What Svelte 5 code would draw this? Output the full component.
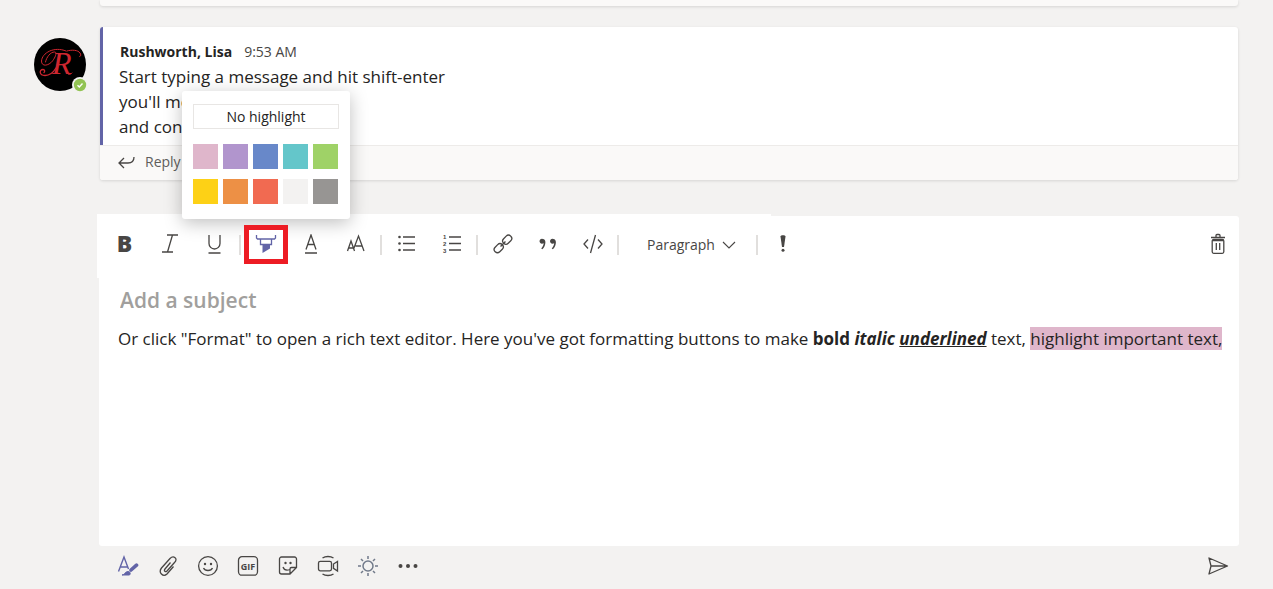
<script>
	// Message shown in the thread.
	const Message = {
		Author: "Rushworth, Lisa",
		Time: "9:53 AM",
		Lines: [
			"Start typing a message and hit shift-enter",
			"you'll move",
			"and continue"
		]
	}

	// Highlight colours, in palette order.
	const Swatches = [
		{ Name: "Pink", Color: "#dfb6cb" },
		{ Name: "Purple", Color: "#b195cd" },
		{ Name: "Blue", Color: "#6888c9" },
		{ Name: "Teal", Color: "#64c6ca" },
		{ Name: "Green", Color: "#9fd267" },
		{ Name: "Yellow", Color: "#fdd116" },
		{ Name: "Orange", Color: "#ed9045" },
		{ Name: "Red", Color: "#f16a51" },
		{ Name: "Light grey", Color: "#f3f2f1" },
		{ Name: "Grey", Color: "#979593" }
	]

	let PaletteOpen = $state(true)
	let Highlight = $state("#dfb6cb")
	let Subject = $state("")

	// Open or close the palette.
	function TogglePalette() {
		PaletteOpen = !PaletteOpen
	}

	// Pick a colour for the marked text.
	function PickColor(Color) {
		Highlight = Color
		PaletteOpen = false
	}
</script>

<div class="page">
	<!-- End of the previous thread. -->
	<div class="previous"></div>

	<!-- Thread. -->
	<section class="thread">
		<div class="avatar">
			<svg width="52" height="53" viewBox="0 0 52 53" aria-hidden="true">
				<ellipse cx="26" cy="26.5" rx="26" ry="26.5" fill="#000" />
				<text x="18" y="36" class="monogram">R</text>
				<g fill="none" stroke="#cf2730" stroke-linecap="round">
					<path d="M32 13C20 8 8 15 7.500 23c0 6 7 5 11 0 3-4 5-9 2-9-4 0-8 5-9 10" stroke-width="1" />
					<path d="M22 30c-3 5-7 7.500-11 7.500-6 0-6-6-2-6 2 0 2 2 1 3" stroke-width="1.300" />
					<path d="M33 13c5-1.500 11-1 13 2 1.500 2 .5 4-.5 3.500M33 35c1 2 3 2 5 0" stroke-width="1" />
				</g>
			</svg>
			<svg class="presence" width="16" height="16" viewBox="0 0 16 16" role="img" aria-label="Available">
				<circle cx="8" cy="8" r="8" fill="#f3f2f1" />
				<circle cx="8" cy="8" r="6.2" fill="#92c353" />
				<path d="M5.500 8.200l1.800 1.700 3.200-3.400" fill="none" stroke="#fff" stroke-width="1.400" />
			</svg>
		</div>

		<article class="card">
			<div class="message">
				<header><strong>{Message.Author}</strong><time>{Message.Time}</time></header>
				{#each Message.Lines as Line}
					<p>{Line}</p>
				{/each}
			</div>
			<button class="reply">
				<svg width="18" height="14" viewBox="0 0 18 14" class="line" aria-hidden="true">
					<path d="M6 3L1 8l5 5M1 8h9c4 0 6-2 6-6" />
				</svg>
				Reply
			</button>
		</article>
	</section>

	<!-- Editor. -->
	<section class="composer">
		<div class="toolbar" role="toolbar" aria-label="Formatting">
			<button class="tool bold" aria-label="Bold">B</button>
			<button class="tool" aria-label="Italic">
				<svg width="20" height="20" viewBox="0 0 20 20" class="line"><path d="M7 1h11M2 18h11M12.500 1l-5 17" /></svg>
			</button>
			<button class="tool" aria-label="Underline">
				<svg width="20" height="20" viewBox="0 0 20 20" class="line"><path d="M4 1v8.500a5.500 5.500 0 0 0 11 0V1M3.500 19h12" /></svg>
			</button>
			<span class="divider"></span>

			<div class="picker">
				<button class="tool marked" aria-label="Text highlight colour" aria-expanded={PaletteOpen} onclick={TogglePalette}>
					<svg width="22" height="20" viewBox="0 0 22 20">
						<path d="M1.500 1v3l1 1h17l1-1V1M5.500 5v5.500h11V5" fill="none" stroke="#6264a7" stroke-width="1.300" />
						<path d="M7.500 11h7.500v3.500L7.500 19z" fill="#6264a7" />
					</svg>
				</button>
				{#if PaletteOpen}
					<div class="palette">
						<button class="none" onclick={() => PickColor("transparent")}>No highlight</button>
						<div class="swatches">
							{#each Swatches as Swatch}
								<button aria-label={Swatch.Name} style="background: {Swatch.Color}" onclick={() => PickColor(Swatch.Color)}></button>
							{/each}
						</div>
					</div>
				{/if}
			</div>
			<button class="tool" aria-label="Font colour">
				<svg width="20" height="20" viewBox="0 0 20 20" class="line"><path d="M5 15.500L10 1l5 14.500M6.700 10.500h6.600M4 19h12" /></svg>
			</button>
			<button class="tool" aria-label="Font size">
				<svg width="20" height="20" viewBox="0 0 20 20" class="line"><path d="M1.500 17L5 7l3.500 10M2.500 14h5M7.800 14.500L12.500 2l5.500 15M9.500 12h7" /></svg>
			</button>
			<span class="divider"></span>

			<button class="tool" aria-label="Bulleted list">
				<svg width="20" height="20" viewBox="0 0 20 20" class="line">
					<path d="M6 3h12M6 9.500h12M6 16h12" />
					<g fill="#484644" stroke="none"><circle cx="2.500" cy="3" r="1.300" /><circle cx="2.500" cy="9.500" r="1.300" /><circle cx="2.500" cy="16" r="1.300" /></g>
				</svg>
			</button>
			<button class="tool" aria-label="Numbered list">
				<svg width="20" height="20" viewBox="0 0 20 20" class="line">
					<path d="M7 3h12M7 9.500h12M7 16h12" />
					<g class="digits"><text x="1" y="5">1</text><text x="1" y="12">2</text><text x="1" y="19">3</text></g>
				</svg>
			</button>
			<span class="divider"></span>

			<button class="tool" aria-label="Insert link">
				<svg width="22" height="22" viewBox="0 0 22 22" class="line">
					<g transform="rotate(-45 11 11)"><rect x="0" y="7.700" width="10" height="6.500" rx="3.200" /><rect x="12" y="7.700" width="10" height="6.500" rx="3.200" /><path d="M7.500 11h7" /></g>
				</svg>
			</button>
			<button class="tool" aria-label="Quote">
				<svg width="20" height="20" viewBox="0 0 20 20" fill="#484644">
					<path d="M5 5a2.500 2.500 0 1 0-1 4.800c.8 0 1.200-.2 1.700-.5-.3 2-1 3.500-2.500 5.200l1.200.8c2-2 3-4.500 3-7C7.400 6.300 6.500 5 5 5z" />
					<path d="M15.500 5a2.500 2.500 0 1 0-1 4.800c.8 0 1.200-.2 1.700-.5-.3 2-1 3.500-2.500 5.200l1.200.8c2-2 3-4.500 3-7 0-2-1-3.300-2.400-3.300z" />
				</svg>
			</button>
			<button class="tool" aria-label="Code snippet">
				<svg width="20" height="20" viewBox="0 0 20 20" class="line"><path d="M5 5.500L1 10l4 4.500M15 5.500l4 4.500-4 4.500M12.500 1l-5 18" /></svg>
			</button>
			<span class="divider"></span>

			<label class="style">
				<select aria-label="Paragraph style">
					<option>Paragraph</option>
					<option>Heading 1</option>
					<option>Heading 2</option>
				</select>
				<svg width="14" height="8" viewBox="0 0 14 8" class="line thin"><path d="M1 1l6 6 6-6" /></svg>
			</label>
			<span class="divider"></span>

			<button class="tool" aria-label="Mark as important">
				<svg width="20" height="20" viewBox="0 0 20 20" fill="#484644"><path d="M7.500 2.500c0-1.800 5-1.800 5 0L11 13H9z" /><circle cx="10" cy="16.300" r="1.500" /></svg>
			</button>
			<button class="tool last" aria-label="Discard">
				<svg width="18" height="22" viewBox="0 0 18 22" class="line">
					<path d="M2 4.500h14M7 4V2.500q0-1 1-1h2q1 0 1 1V4" />
					<rect x="3.200" y="6.500" width="11.600" height="13.800" rx="1.500" />
					<path d="M3.500 7.500h11M7.300 10v7M10.700 10v7" />
				</svg>
			</button>
		</div>

		<input class="subject" aria-label="Subject" placeholder="Add a subject" bind:value={Subject}>
		<div class="editor" contenteditable="true" role="textbox" aria-label="Message" tabindex="0" spellcheck="false">
			Or click "Format" to open a rich text editor. Here you've got formatting buttons to make <b>bold</b> <b><i>italic</i></b> <b><i><u>underlined</u></i></b> text, <mark style="background: {Highlight}">highlight important text,</mark>
		</div>
	</section>

	<!-- Actions under the editor. -->
	<footer class="actions">
		<button class="action" aria-label="Format">
			<svg width="22" height="22" viewBox="0 0 22 22" fill="none" stroke="#6264a7" stroke-width="1.400">
				<path d="M1.500 16.500L7 2l4.500 12M3.500 12h7" />
				<path d="M14 15l5.500-4.800" stroke-width="3.600" stroke-linecap="round" />
				<path d="M5 20c3 0 3-3.500 6-3.500 2 0 3 2 1.500 3.500z" fill="#6264a7" stroke-width="1" />
			</svg>
		</button>
		<button class="action" aria-label="Attach">
			<svg width="22" height="22" viewBox="0 0 22 22" class="line"><path d="M13.500 7.500L8 14c-1.500 2 .5 3.500 2 2l7.500-8.500c4-4-1-7.500-4.500-4L4.500 13c-3.500 4.500 1.500 9.500 5.500 6l6.500-7.500" /></svg>
		</button>
		<button class="action" aria-label="Emoji">
			<svg width="22" height="22" viewBox="0 0 22 22" class="line"><circle cx="11" cy="11" r="9.400" /><path d="M6.500 13c1.500 3.300 7.500 3.300 9 0" /><g fill="#484644" stroke="none"><circle cx="8" cy="9" r="1.200" /><circle cx="14" cy="9" r="1.200" /></g></svg>
		</button>
		<button class="action" aria-label="Giphy">
			<svg width="22" height="22" viewBox="0 0 22 22" class="line"><rect x="1.500" y="1.700" width="19" height="18.500" rx="3.500" /><text x="11" y="14.700" text-anchor="middle" class="gif">GIF</text></svg>
		</button>
		<button class="action" aria-label="Sticker">
			<svg width="22" height="22" viewBox="0 0 22 22" class="line"><path d="M19.500 12.500V4a2 2 0 0 0-2-2h-13a2 2 0 0 0-2 2v13a2 2 0 0 0 2 2H13zh-5a1.500 1.500 0 0 0-1.500 1.500v5M6 12c1 3 4 3.500 7 2.500" /><g fill="#484644" stroke="none"><circle cx="8.500" cy="8" r="1.200" /><circle cx="13.500" cy="8" r="1.200" /></g></svg>
		</button>
		<button class="action" aria-label="Meet now">
			<svg width="22" height="22" viewBox="0 0 22 22" class="line"><rect x="1.500" y="6.300" width="13" height="9.500" rx="1.800" /><path d="M20.500 6.500v9.500l-4-2.700V9zM5.500 3c3-2 8-2 11 0M5.500 19c3 2 8 2 11 0" /></svg>
		</button>
		<button class="action" aria-label="Praise">
			<svg width="22" height="22" viewBox="0 0 22 22" fill="none" stroke="#717a8a" stroke-width="1.500"><circle cx="11" cy="11" r="5" /><path d="M11 1v3M11 18v3M1 11h3M18 11h3M4 4l2 2M16 16l2 2M18 4l-2 2M6 16l-2 2" /></svg>
		</button>
		<button class="action" aria-label="More options">
			<svg width="22" height="22" viewBox="0 0 22 22" fill="#484644"><circle cx="3.500" cy="11" r="2" /><circle cx="11" cy="11" r="2" /><circle cx="18.500" cy="11" r="2" /></svg>
		</button>
		<button class="action last" aria-label="Send">
			<svg width="22" height="20" viewBox="0 0 22 20" class="line"><path d="M2 2l18.500 8L2 18l2-8zM4 10h16" stroke-linejoin="round" /></svg>
		</button>
	</footer>
</div>

<style>
	:global(body) {
		background-color: #f3f2f1;
	}

	.page {
		font-family: "Segoe UI", "Open Sans", sans-serif;
		color: #252423;
		padding: 0 35px 0 34px;
	}

	button {
		font: inherit;
		color: inherit;
		background: none;
		border: 0;
		padding: 0;
		cursor: pointer;
	}

	svg {
		display: block;
	}

	.line {
		fill: none;
		stroke: #484644;
		stroke-width: 1.3;
	}

	.thin {
		stroke-width: 1.1;
	}

	/* Thread. */
	.previous {
		height: 6px;
		margin-left: 66px;
		background: #faf9f8;
		border-radius: 0 0 3px 3px;
		box-shadow: 0 1px 3px rgba(0, 0, 0, 0.12);
	}

	.thread {
		display: flex;
		align-items: flex-start;
		gap: 14px;
		margin-top: 21px;
	}

	.avatar {
		position: relative;
		margin-top: 11px;
	}

	.monogram {
		font: italic 32px "Liberation Serif", serif;
		fill: #cf2730;
	}

	.presence {
		position: absolute;
		right: -2px;
		bottom: -2px;
	}

	.card {
		flex: 1;
		background: #fff;
		border-radius: 3px;
		box-shadow: 0 1px 3px rgba(0, 0, 0, 0.12);
		overflow: hidden;
	}

	.message {
		border-left: 3px solid #6264a7;
		padding: 13px 16px 6px;
	}

	.message header {
		display: flex;
		gap: 12px;
		padding-left: 1px;
		font-size: 14px;
		line-height: 24px;
	}

	.message time {
		color: #484644;
	}

	.message p {
		margin: 0;
		font-size: 17px;
		line-height: 25px;
	}

	.reply {
		display: flex;
		align-items: center;
		gap: 9px;
		width: 100%;
		height: 35px;
		padding: 0 0 3px 18px;
		background: #faf9f8;
		border-top: 1px solid #edebe9;
		color: #605e5c;
		font-size: 14px;
	}

	/* Editor. */
	.composer {
		position: relative;
		margin: 36px -1px 0 65px;
		padding-bottom: 194px;
		background: #fff;
		border-radius: 3px;
	}

	.composer::before {
		content: "";
		position: absolute;
		left: -2px;
		top: -2px;
		width: 674px;
		height: 64px;
		background: #fff;
	}

	.toolbar {
		position: relative;
		display: flex;
		align-items: center;
		padding: 9px 0 0 3px;
	}

	.tool {
		display: flex;
		align-items: center;
		justify-content: center;
		box-sizing: border-box;
		width: 45px;
		height: 39px;
		padding-bottom: 2px;
		flex: none;
	}

	.bold {
		padding-bottom: 4px;
		font-size: 23px;
		font-weight: 800;
		color: #484644;
	}

	.marked {
		position: relative;
		z-index: 2;
		width: 44px;
		border: 5px solid #ed1c24;
		background: #fff;
	}

	.divider {
		width: 2px;
		height: 20px;
		margin: 0 2px;
		background: #e1dfdd;
	}

	.digits text {
		font: bold 6px "Liberation Sans", sans-serif;
		fill: #484644;
		stroke: none;
	}

	.style {
		display: flex;
		align-items: center;
		gap: 7px;
		width: 107px;
		padding-left: 26px;
	}

	.style select {
		appearance: none;
		border: 0;
		padding: 0;
		background: none;
		font: inherit;
		font-size: 14px;
		color: #484644;
	}

	.last {
		margin-left: auto;
	}

	.tool.last {
		width: 42px;
	}

	/* Highlight palette, above its button. */
	.picker {
		position: relative;
		margin-left: 1px;
	}

	.palette {
		position: absolute;
		left: -62px;
		bottom: calc(100% + 6px);
		z-index: 1;
		padding: 13px 11px 15px;
		background: #fff;
		border-radius: 3px;
		box-shadow: 0 4px 18px rgba(0, 0, 0, 0.25);
	}

	.none {
		display: block;
		width: 146px;
		height: 25px;
		border: 1px solid #e8e6e4;
		font-size: 14px;
		line-height: 23px;
	}

	.swatches {
		display: grid;
		grid-template-columns: repeat(5, 25px);
		grid-auto-rows: 25px;
		gap: 10px 5px;
		margin-top: 15px;
	}

	.subject {
		display: block;
		position: relative;
		width: 100%;
		box-sizing: border-box;
		border: 0;
		outline: 0;
		margin-top: 20px;
		padding: 0 21px;
		background: none;
		font: 600 21px/32px "Segoe UI", "Open Sans", sans-serif;
	}

	.subject::placeholder {
		color: #a19f9d;
		opacity: 1;
	}

	.editor {
		margin-top: 10px;
		padding: 0 12px 0 19px;
		outline: 0;
		font-size: 17px;
		line-height: 26px;
	}

	mark {
		color: inherit;
	}

	/* Bottom bar. */
	.actions {
		display: flex;
		margin-left: 74px;
	}

	.action {
		display: flex;
		align-items: center;
		justify-content: center;
		width: 40px;
		height: 40px;
	}

	.gif {
		font: bold 9px "Open Sans", sans-serif;
		fill: #484644;
		stroke: none;
	}
</style>
